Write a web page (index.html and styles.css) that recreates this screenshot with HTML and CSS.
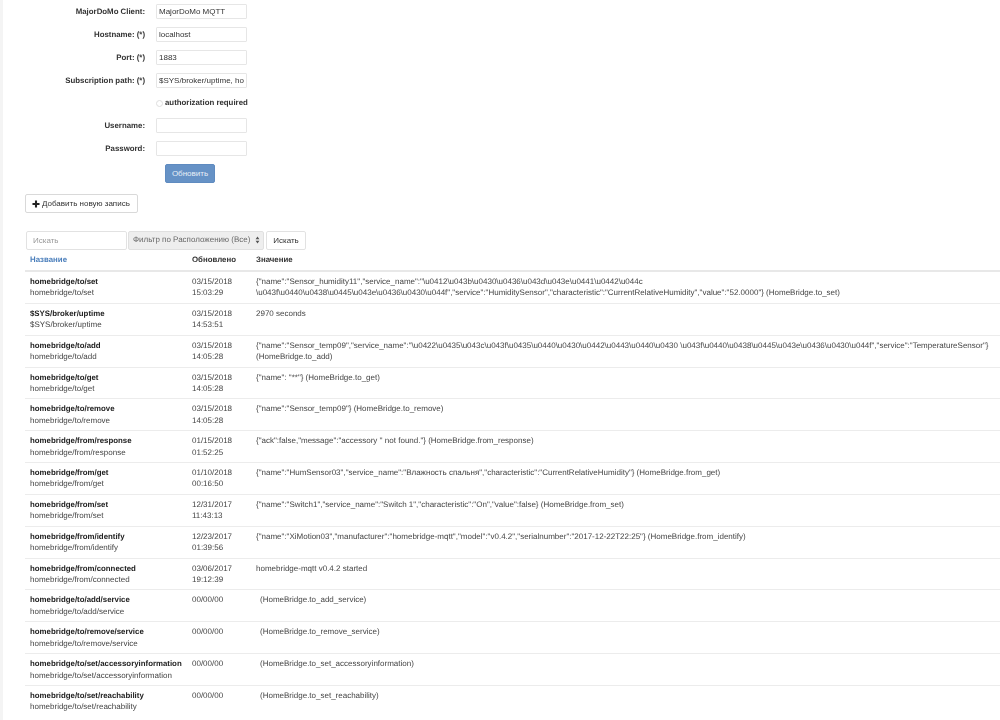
FILE: index.html
```
<!DOCTYPE html>
<html lang="ru">
<head>
<meta charset="utf-8">
<title>MQTT</title>
<link rel="stylesheet" href="styles.css">
</head>
<body>
<form class="settings">
  <div class="field"><label class="lbl">MajorDoMo Client:</label><input class="inp" value="MajorDoMo MQTT"></div>
  <div class="field"><label class="lbl">Hostname: (*)</label><input class="inp" value="localhost"></div>
  <div class="field"><label class="lbl">Port: (*)</label><input class="inp" value="1883"></div>
  <div class="field"><label class="lbl">Subscription path: (*)</label><input class="inp" value="$SYS/broker/uptime, homebridge/#"></div>
  <div class="field check"><span class="lbl"></span><span class="radio"></span><b>authorization required</b></div>
  <div class="field"><label class="lbl">Username:</label><input class="inp"></div>
  <div class="field"><label class="lbl">Password:</label><input class="inp"></div>
  <div class="submit-row"><button type="button" class="primary">Обновить</button></div>
</form>
<button type="button" class="add"><svg class="plus" viewBox="0 0 10 10"><path d="M3.7 0.6h2.6v3.1h3.1v2.6H6.3v3.1H3.7V6.3H0.6V3.7h3.1z"/></svg>Добавить новую запись</button>
<div class="search">
  <input class="q" placeholder="Искать">
  <div class="filter"><span>Фильтр по Расположению (Все)</span><svg class="updown" viewBox="0 0 6 10"><path d="M3 0.5 5.4 4H0.6zM3 9.5 0.6 6h4.8z"/></svg></div>
  <button type="button" class="go">Искать</button>
</div>
<table class="list">
<thead><tr><th class="name"><a>Название</a></th><th class="upd">Обновлено</th><th>Значение</th></tr></thead>
<tbody>
<tr><td><b>homebridge/to/set</b><br>homebridge/to/set</td><td>03/15/2018<br>15:03:29</td><td>{"name":"Sensor_humidity11","service_name":"\u0412\u043b\u0430\u0436\u043d\u043e\u0441\u0442\u044c<br>\u043f\u0440\u0438\u0445\u043e\u0436\u0430\u044f","service":"HumiditySensor","characteristic":"CurrentRelativeHumidity","value":"52.0000"} (HomeBridge.to_set)</td></tr>
<tr><td><b>$SYS/broker/uptime</b><br>$SYS/broker/uptime</td><td>03/15/2018<br>14:53:51</td><td>2970 seconds</td></tr>
<tr><td><b>homebridge/to/add</b><br>homebridge/to/add</td><td>03/15/2018<br>14:05:28</td><td>{"name":"Sensor_temp09","service_name":"\u0422\u0435\u043c\u043f\u0435\u0440\u0430\u0442\u0443\u0440\u0430 \u043f\u0440\u0438\u0445\u043e\u0436\u0430\u044f","service":"TemperatureSensor"}<br>(HomeBridge.to_add)</td></tr>
<tr><td><b>homebridge/to/get</b><br>homebridge/to/get</td><td>03/15/2018<br>14:05:28</td><td>{"name": "**"} (HomeBridge.to_get)</td></tr>
<tr><td><b>homebridge/to/remove</b><br>homebridge/to/remove</td><td>03/15/2018<br>14:05:28</td><td>{"name":"Sensor_temp09"} (HomeBridge.to_remove)</td></tr>
<tr><td><b>homebridge/from/response</b><br>homebridge/from/response</td><td>01/15/2018<br>01:52:25</td><td>{"ack":false,"message":"accessory '' not found."} (HomeBridge.from_response)</td></tr>
<tr><td><b>homebridge/from/get</b><br>homebridge/from/get</td><td>01/10/2018<br>00:16:50</td><td>{"name":"HumSensor03","service_name":"Влажность спальня","characteristic":"CurrentRelativeHumidity"} (HomeBridge.from_get)</td></tr>
<tr><td><b>homebridge/from/set</b><br>homebridge/from/set</td><td>12/31/2017<br>11:43:13</td><td>{"name":"Switch1","service_name":"Switch 1","characteristic":"On","value":false} (HomeBridge.from_set)</td></tr>
<tr><td><b>homebridge/from/identify</b><br>homebridge/from/identify</td><td>12/23/2017<br>01:39:56</td><td>{"name":"XiMotion03","manufacturer":"homebridge-mqtt","model":"v0.4.2","serialnumber":"2017-12-22T22:25"} (HomeBridge.from_identify)</td></tr>
<tr><td><b>homebridge/from/connected</b><br>homebridge/from/connected</td><td>03/06/2017<br>19:12:39</td><td>homebridge-mqtt v0.4.2 started</td></tr>
<tr><td><b>homebridge/to/add/service</b><br>homebridge/to/add/service</td><td>00/00/00</td><td class="ind">(HomeBridge.to_add_service)</td></tr>
<tr><td><b>homebridge/to/remove/service</b><br>homebridge/to/remove/service</td><td>00/00/00</td><td class="ind">(HomeBridge.to_remove_service)</td></tr>
<tr><td><b>homebridge/to/set/accessoryinformation</b><br>homebridge/to/set/accessoryinformation</td><td>00/00/00</td><td class="ind">(HomeBridge.to_set_accessoryinformation)</td></tr>
<tr><td><b>homebridge/to/set/reachability</b><br>homebridge/to/set/reachability</td><td>00/00/00</td><td class="ind">(HomeBridge.to_set_reachability)</td></tr>
</tbody>
</table>
</body>
</html>
```
FILE: styles.css
```
* { box-sizing: border-box; }
html, body { margin: 0; height: 720px; overflow: hidden; }
body {
  background: #fff;
  color: #333;
  font: 8px/11.4px "Liberation Sans", Arial, sans-serif;
  text-rendering: geometricPrecision;
  padding: 4px 0 0 22px;
  border-left: 3px solid #f4f4f4;
  filter: blur(0.4px);
}
b, th, .lbl { font-size: 7.85px; }
.settings { display: flex; flex-direction: column; }
.field { display: flex; align-items: center; gap: 11px; height: 15px; margin-bottom: 8px; }
.lbl { width: 120px; padding-top: 1px; text-align: right; font-weight: bold; flex: none; }
.inp {
  width: 91px; height: 15px; padding: 0 2px; flex: none;
  border: 1px solid #e6e6e6; border-radius: 1px;
  font: 8px "Liberation Sans", Arial, sans-serif; color: #333; background: #fff; outline: 0;
}
.check { gap: 0; margin: -1px 0 7px; height: 16px; }
.check .lbl { margin-right: 11px; }
.radio { width: 7px; height: 7px; border: 1px solid #ddd; border-radius: 50%; margin-right: 2px; }
.submit-row { padding-left: 140px; }
.primary {
  width: 50px; height: 19px; padding: 0; display: block;
  background: #6692c6; border: 1px solid #5f8bc0; border-radius: 2px; color: #e8eff7;
  font: 8px "Liberation Sans", Arial, sans-serif;
}
.add {
  display: flex; align-items: center; gap: 2px; white-space: nowrap;
  width: 113px; height: 19px; margin-top: 11px; padding: 0 0 0 6px;
  background: #fff; border: 1px solid #d9d9d9; border-radius: 2px; color: #333;
  font: 8px "Liberation Sans", Arial, sans-serif;
}
.plus { width: 8px; height: 8px; fill: #222; }
.search { display: flex; align-items: center; gap: 1px; margin-top: 17px; height: 20px; }
.q {
  width: 101px; height: 19px; padding: 0 6px; margin-left: 1px;
  border: 1px solid #e2e2e2; border-radius: 2px; outline: 0;
  font: 8px "Liberation Sans", Arial, sans-serif;
}
.q::placeholder { color: #999; }
.filter {
  display: flex; align-items: center; justify-content: space-between; white-space: nowrap;
  width: 136px; height: 19px; padding: 0 3px 0 4px;
  background: #eee; border: 1px solid #e0e0e0; border-radius: 2px; color: #666;
}
.filter span { opacity: .99; }
.updown { width: 5px; height: 8px; fill: #555; }
.go {
  width: 40px; height: 19px; padding: 0; margin-left: 1px;
  background: #fff; border: 1px solid #e2e2e2; border-radius: 2px; color: #333;
  font: 8px "Liberation Sans", Arial, sans-serif;
}
.list { width: 975px; border-collapse: separate; border-spacing: 0; table-layout: fixed; }
.list th { height: 22px; padding: 0 5px; text-align: left; border-bottom: 2px solid #e8e8e8; font-weight: bold; }
.list th.name { width: 162px; }
.list th.upd { width: 64px; }
.list th a { color: #4a7ebb; }
.list td { height: 31.85px; padding: 4px 5px 0; vertical-align: top; border-bottom: 1px solid #ececec; color: #444; white-space: nowrap; }
.list tr:last-child td { border-bottom: 0; }
.list td b { color: #222; }
.list td.ind { padding-left: 9px; }
```
